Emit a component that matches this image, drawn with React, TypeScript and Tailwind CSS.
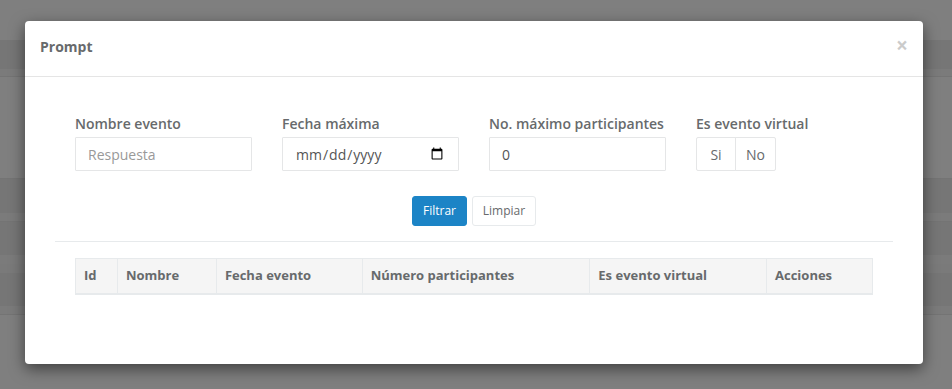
const COLUMNS = [
  { label: "Id", width: "w-[42px]" },
  { label: "Nombre", width: "w-[99px]" },
  { label: "Fecha evento", width: "w-[146px]" },
  { label: "Número participantes", width: "w-[228px]" },
  { label: "Es evento virtual", width: "w-[177px]" },
  { label: "Acciones", width: "w-[106px]" },
];

function Field({ label, children }: { label: string; children: React.ReactNode }) {
  return (
    <div className="w-[177px]">
      <label className="mb-[3px] block text-[14px] font-semibold leading-[20px] text-[#676a6c]">{label}</label>
      {children}
    </div>
  );
}

const inputCls =
  "h-[34px] w-full rounded-[1px] border border-[#e5e6e7] bg-white px-[12px] text-[14px] text-[#555] outline-none placeholder:text-[#999]";

export default function App() {
  return (
    <div className="relative h-[389px] w-full overflow-hidden bg-[#7f7f7f] font-['Open_Sans',sans-serif]">
      {/* page behind the backdrop */}
      <div className="flex flex-col">
        <div className="h-[40px]" />
        <div className="h-[29px] bg-[#767676]" />
        <div className="h-[8px] border-b border-[#747474] bg-[#7b7b7b]" />
        <div className="h-[101px]" />
        <div className="h-[35px] border-t border-[#747474] bg-[#767676]" />
        <div className="h-[9px] border-b border-[#747474] bg-[#7b7b7b]" />
        <div className="h-[33px] bg-[#767676]" />
        <div className="h-[9px] bg-[#7b7b7b]" />
        <div className="h-[9px] bg-[#7a7a7a]" />
        <div className="h-[33px] bg-[#767676]" />
        <div className="h-[9px] border-b border-[#747474] bg-[#7b7b7b]" />
      </div>

      {/* modal */}
      <div className="absolute left-[25px] top-[21px] w-[898px] rounded-[4px] bg-white shadow-[0_5px_15px_rgba(0,0,0,0.5)]">
        <div className="flex h-[56px] items-center justify-between border-b border-[#e5e5e5] px-[15px] pb-[5px]">
          <h4 className="text-[14px] font-bold text-[#676a6c]">Prompt</h4>
          <button className="-mt-[2px] text-[21px] font-bold leading-none text-black opacity-20">×</button>
        </div>

        <div className="pb-[69px] pt-[37px]">
          <div className="flex gap-[30px] pl-[50px]">
            <Field label="Nombre evento">
              <input className={inputCls} placeholder="Respuesta" />
            </Field>
            <Field label="Fecha máxima">
              <input type="date" className={inputCls} />
            </Field>
            <Field label="No. máximo participantes">
              <input type="number" className={inputCls} defaultValue={0} />
            </Field>
            <Field label="Es evento virtual">
              <div className="flex">
                <button className="h-[34px] w-[40px] rounded-l-[2px] border border-[#e5e6e7] text-[14px] text-[#676a6c]">Si</button>
                <button className="-ml-px h-[34px] w-[41px] rounded-r-[2px] border border-[#e5e6e7] text-[14px] text-[#676a6c]">No</button>
              </div>
            </Field>
          </div>

          <div className="mt-[25px] flex justify-center gap-[5px]">
            <button className="h-[30px] w-[55px] rounded-[3px] border border-[#1c84c6] bg-[#1c84c6] text-[12px] text-white">Filtrar</button>
            <button className="h-[30px] w-[64px] rounded-[3px] border border-[#e7eaec] bg-white text-[12px] text-[#676a6c]">Limpiar</button>
          </div>

          <div className="mx-[30px] mt-[15px] border-t border-[#e7eaec]" />

          <div className="mx-[50px] mt-[16px]">
            <table className="w-full border-collapse">
              <thead>
                <tr>
                  {COLUMNS.map((c) => (
                    <th
                      key={c.label}
                      className={`${c.width} h-[35px] border border-b-2 border-[#e7eaec] bg-[#f5f5f5] px-[8px] text-left text-[13px] font-bold text-[#676a6c]`}
                    >
                      {c.label}
                    </th>
                  ))}
                </tr>
              </thead>
            </table>
          </div>
        </div>
      </div>
    </div>
  );
}
